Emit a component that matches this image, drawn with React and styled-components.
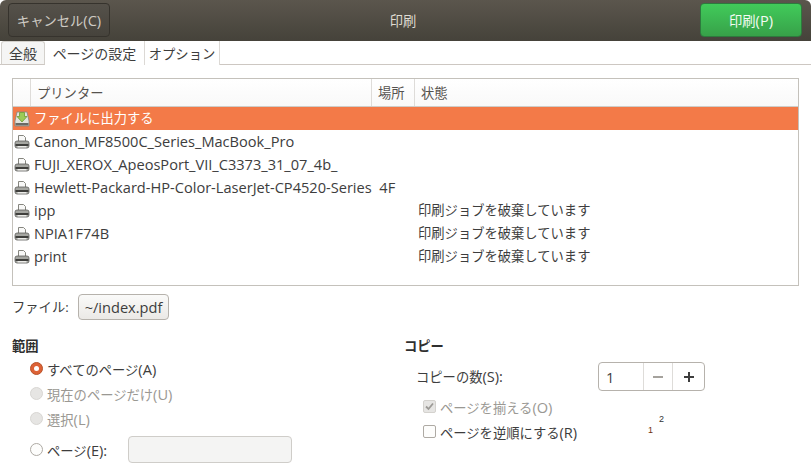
import React from "react";
import styled, { createGlobalStyle } from "styled-components";

const Global = createGlobalStyle`
  html, body { margin: 0; padding: 0; background: #fff; }
  body { font-family: "Open Sans", "Noto Sans CJK JP", sans-serif; font-size: 13.3px; color: #3d3d3d; }
`;

const Win = styled.div`
  position: relative;
  width: 811px;
  height: 476px;
  overflow: hidden;
  background: #fff;
`;

const TitleBar = styled.div`
  height: 41px;
  box-sizing: border-box;
  padding: 3px 9px 4px 8px;
  display: flex;
  align-items: center;
  justify-content: space-between;
  border-radius: 6px 6px 0 0;
  background: linear-gradient(#5b564d, #45423a);
`;

const HeadButton = styled.div`
  height: 34px;
  box-sizing: border-box;
  display: flex;
  align-items: center;
  justify-content: center;
  border-radius: 4px;
  width: ${(p) => p.$w}px;
  color: ${(p) => (p.$green ? "#f4fbf3" : "#cfccc5")};
  border: 1px solid ${(p) => (p.$green ? "#2d7a3d" : "#36332d")};
  background: ${(p) =>
    p.$green ? "linear-gradient(#41cb5a, #37a149)" : "linear-gradient(#55514a, #46433c)"};
`;

const Title = styled.div`
  color: #dfdbd2;
  margin-left: -4px;
`;

const Tabs = styled.div`
  display: flex;
  height: 24px;
  box-sizing: border-box;
  border-bottom: 1px solid #cdc7c2;
`;

const Tab = styled.div`
  height: 24px;
  box-sizing: border-box;
  width: ${(p) => p.$w}px;
  display: flex;
  align-items: center;
  justify-content: center;
  font-size: ${(p) => p.$fs || 14}px;
  border-right: 1px solid #dcd9d5;
  background: #fff;
  ${(p) =>
    p.$active &&
    "margin-left: 1px; background: #f5f5f4; border: 1px solid #d3d0cb; border-bottom-color: #cdc7c2; border-radius: 3px 3px 0 0;"}
`;

const Body = styled.div`
  padding: 13px 12px 0;
`;

const ListFrame = styled.div`
  width: 787px;
  height: 208px;
  box-sizing: border-box;
  border: 1px solid #c4c1bb;
`;

const ListHead = styled.div`
  height: 28px;
  box-sizing: border-box;
  display: grid;
  grid-template-columns: 18px 341px 43px 1fr;
  background: linear-gradient(#fff, #f9f9f9);
  border-bottom: 1px solid #cfcdc9;
`;

const HeadCell = styled.div`
  display: flex;
  align-items: center;
  padding-left: 6px;
  color: #55524e;
  padding-bottom: 1px;
  border-right: 1px solid ${(p) => (p.$last ? "transparent" : "#dedcd9")};
`;

const Row = styled.div`
  height: 23px;
  display: grid;
  grid-template-columns: 21px 384px 1fr;
  align-items: center;
  line-height: 21px;
  color: ${(p) => (p.$selected ? "#fff" : "#3d3d3d")};
  background: ${(p) => (p.$selected ? "#f37a48" : "#fff")};
`;

const Latin = styled.span`
  font-size: 14.6px;
  white-space: pre;
`;

const IconCell = styled.div`
  display: flex;
  justify-content: center;
  padding-right: 3px;
`;

const FileRow = styled.div`
  display: flex;
  align-items: center;
  margin-top: 6px;
  height: 29px;
`;

const FileLabel = styled.div`
  width: 66px;
`;

const FileButton = styled.div`
  height: 26px;
  width: 91px;
  box-sizing: border-box;
  display: flex;
  align-items: center;
  justify-content: center;
  border: 1px solid #b6b2ac;
  border-radius: 4px;
  background: linear-gradient(#fafaf9, #ebe9e6);
`;

const Columns = styled.div`
  display: grid;
  grid-template-columns: 392px 1fr;
  margin-top: 15px;
`;

const Section = styled.div`
  display: flex;
  flex-direction: column;
`;

const SectionTitle = styled.div`
  font-weight: 700;
  color: #2f2f2f;
  line-height: 20px;
`;

const Option = styled.div`
  display: flex;
  align-items: center;
  gap: 4px;
  height: ${(p) => p.$h || 25}px;
  padding-left: 18px;
  color: ${(p) => (p.$disabled ? "#9a9893" : "#3d3d3d")};
`;

const Radio = styled.span`
  width: 13px;
  height: 13px;
  box-sizing: border-box;
  border-radius: 50%;
  display: flex;
  align-items: center;
  justify-content: center;
  border: 1px solid ${(p) => (p.$on ? "#b9532a" : p.$disabled ? "#d8d6d3" : "#aeaaa4")};
  background: ${(p) => (p.$on ? "#dd6236" : p.$disabled ? "#e6e5e3" : "#fdfdfc")};
  &::after {
    content: "";
    display: ${(p) => (p.$on ? "block" : "none")};
    width: 5px;
    height: 5px;
    border-radius: 50%;
    background: #fff;
  }
`;

const PageInput = styled.div`
  width: 164px;
  height: 27px;
  box-sizing: border-box;
  margin-left: 17px;
  border: 1px solid #cfcdc9;
  border-radius: 4px;
  background: #f4f4f3;
`;

const CountRow = styled.div`
  display: flex;
  align-items: center;
  margin-top: 6px;
  padding-left: 12px;
  height: 29px;
`;

const CountLabel = styled.div`
  width: 182px;
  padding-bottom: 2px;
`;

const Spin = styled.div`
  width: 107px;
  height: 29px;
  box-sizing: border-box;
  display: grid;
  grid-template-columns: 44px 29px 1fr;
  border: 1px solid #b6b2ac;
  border-radius: 4px;
  background: #fff;
`;

const SpinCell = styled.div`
  display: flex;
  align-items: center;
  justify-content: ${(p) => (p.$value ? "flex-start" : "center")};
  padding-left: ${(p) => (p.$value ? 7 : 0)}px;
  font-size: ${(p) => (p.$value ? 14.6 : 13)}px;
  border-left: ${(p) => (p.$value ? "none" : "1px solid #dedcd9")};
`;

const Check = styled.span`
  width: 13px;
  height: 13px;
  box-sizing: border-box;
  display: flex;
  align-items: center;
  justify-content: center;
  border-radius: 2px;
  border: 1px solid ${(p) => (p.$disabled ? "#d4d2ce" : "#aeaaa4")};
  background: ${(p) => (p.$disabled ? "#e6e5e3" : "#fdfdfc")};
`;

const CheckRow = styled(Option)`
  height: 25px;
  padding-left: 19px;
`;

const CheckRows = styled.div`
  margin-top: 3px;
`;

const PageNum = styled.span`
  position: absolute;
  left: ${(p) => p.$x}px;
  top: ${(p) => p.$y}px;
  font-family: "Liberation Sans", sans-serif;
  font-size: 9px;
  line-height: 10px;
  color: ${(p) => p.$c};
`;

const PrinterIcon = () => (
  <svg width="16" height="16" viewBox="0 0 16 16">
    <path d="M4.500 1.500h5l2 2v4h-7z" fill="#f8f8f7" stroke="#86867f" />
    <path d="M3 7h10q2 0 2 2v3q0 2-2 2H3q-2 0-2-2V9q0-2 2-2z" fill="#a5a6a1" stroke="#5e5e5a" strokeWidth="0.800" />
    <rect x="1.500" y="10" width="13" height="2" fill="#3f3f3c" />
    <rect x="3.500" y="12" width="9" height="1.500" fill="#ecece9" />
  </svg>
);

const FileIcon = () => (
  <svg width="16" height="16" viewBox="0 0 16 16">
    <path d="M3 1h10l2 9v5H1v-5z" fill="#e2e3dc" stroke="#85857d" strokeWidth="0.800" />
    <path d="M5.500 1.500h5v4H13L8 11 3 5.500h2.500z" fill="#9ccb58" stroke="#6f9d34" strokeWidth="0.800" />
    <rect x="1.500" y="12" width="13" height="2.500" fill="#6a6a65" />
  </svg>
);

const CheckMark = () => (
  <svg width="11" height="11" viewBox="0 0 11 11">
    <path d="M2 5.500l2.500 2.500L9 2.500" fill="none" stroke="#9c9a96" strokeWidth="1.800" />
  </svg>
);

const SpinIcon = ({ dim, plus }) => (
  <svg width="12" height="12" viewBox="0 0 12 12">
    <path d={plus ? "M1 6h10M6 1v10" : "M1 6h10"} stroke={dim ? "#a5a29d" : "#3d3d3d"} strokeWidth="2" />
  </svg>
);

const printers = [
  { name: "Canon_MF8500C_Series_MacBook_Pro", state: "" },
  { name: "FUJI_XEROX_ApeosPort_VII_C3373_31_07_4b_", state: "" },
  { name: "Hewlett-Packard-HP-Color-LaserJet-CP4520-Series  4F", state: "" },
  { name: "ipp", state: "印刷ジョブを破棄しています" },
  { name: "NPIA1F74B", state: "印刷ジョブを破棄しています" },
  { name: "print", state: "印刷ジョブを破棄しています" },
];

export default function App() {
  return (
    <Win>
      <Global />
      <TitleBar>
        <HeadButton $w={102}><span>キャンセル<Latin>(C)</Latin></span></HeadButton>
        <Title>印刷</Title>
        <HeadButton $w={102} $green><span>印刷<Latin>(P)</Latin></span></HeadButton>
      </TitleBar>
      <Tabs>
        <Tab $active $w={44}>全般</Tab>
        <Tab $w={100}>ページの設定</Tab>
        <Tab $w={75} $fs={13.3}>オプション</Tab>
      </Tabs>
      <Body>
        <ListFrame>
          <ListHead>
            <HeadCell />
            <HeadCell>プリンター</HeadCell>
            <HeadCell>場所</HeadCell>
            <HeadCell $last>状態</HeadCell>
          </ListHead>
          <Row $selected>
            <IconCell><FileIcon /></IconCell>
            <div>ファイルに出力する</div>
            <div />
          </Row>
          {printers.map((p) => (
            <Row key={p.name}>
              <IconCell><PrinterIcon /></IconCell>
              <Latin>{p.name}</Latin>
              <div>{p.state}</div>
            </Row>
          ))}
        </ListFrame>
        <FileRow>
          <FileLabel>ファイル:</FileLabel>
          <FileButton><Latin>~/index.pdf</Latin></FileButton>
        </FileRow>
        <Columns>
          <Section>
            <SectionTitle>範囲</SectionTitle>
            <Option><Radio $on /><span>すべてのページ<Latin>(A)</Latin></span></Option>
            <Option $disabled><Radio $disabled /><span>現在のページだけ<Latin>(U)</Latin></span></Option>
            <Option $disabled><Radio $disabled /><span>選択<Latin>(L)</Latin></span></Option>
            <Option $h={37}><Radio /><span>ページ<Latin>(E):</Latin></span><PageInput /></Option>
          </Section>
          <Section>
            <SectionTitle>コピー</SectionTitle>
            <CountRow>
              <CountLabel>コピーの数<Latin>(S):</Latin></CountLabel>
              <Spin>
                <SpinCell $value>1</SpinCell>
                <SpinCell><SpinIcon dim /></SpinCell>
                <SpinCell><SpinIcon plus /></SpinCell>
              </Spin>
            </CountRow>
            <CheckRows>
              <CheckRow $disabled><Check $disabled><CheckMark /></Check><span>ページを揃える<Latin>(O)</Latin></span></CheckRow>
              <CheckRow><Check /><span>ページを逆順にする<Latin>(R)</Latin></span></CheckRow>
            </CheckRows>
          </Section>
        </Columns>
      </Body>
      <PageNum $x={648} $y={425} $c="#6e3010">1</PageNum>
      <PageNum $x={659} $y={414} $c="#333">2</PageNum>
    </Win>
  );
}
